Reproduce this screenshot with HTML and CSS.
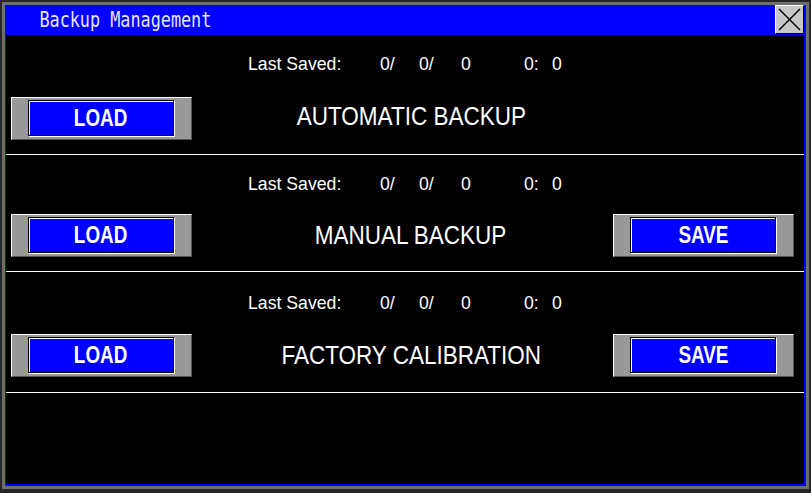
FILE: index.html
```html
<!DOCTYPE html>
<html lang="en">
	<head>
		<meta charset="utf-8">
		<title>Backup Management</title>
		<link rel="stylesheet" href="styles.css">
	</head>
	<body>
		<div class="window">
			<div class="titlebar">
				<span class="caption">Backup Management</span>
				<button class="close" title="Close">
					<svg width="27" height="27" viewBox="0 0 27 27">
						<line x1="3" y1="3" x2="24" y2="24" stroke="#000" stroke-width="1.4"/>
						<line x1="24" y1="3" x2="3" y2="24" stroke="#000" stroke-width="1.4"/>
					</svg>
				</button>
			</div>
			<div class="content">
				<div class="row row-auto">
					<div class="saved">
						<span class="f-label">Last Saved:</span>
						<span class="f-d1">0/</span>
						<span class="f-d2">0/</span>
						<span class="f-d3">0</span>
						<span class="f-d4">0:</span>
						<span class="f-d5">0</span>
					</div>
					<div class="controls">
						<div class="frame"><button class="key"><span>LOAD</span></button></div>
						<div class="name name-up"><span>AUTOMATIC BACKUP</span></div>
						<div class="slot"></div>
					</div>
				</div>
				<div class="row row-manual">
					<div class="saved">
						<span class="f-label">Last Saved:</span>
						<span class="f-d1">0/</span>
						<span class="f-d2">0/</span>
						<span class="f-d3">0</span>
						<span class="f-d4">0:</span>
						<span class="f-d5">0</span>
					</div>
					<div class="controls">
						<div class="frame"><button class="key"><span>LOAD</span></button></div>
						<div class="name"><span>MANUAL BACKUP</span></div>
						<div class="frame frame-right"><button class="key"><span>SAVE</span></button></div>
					</div>
				</div>
				<div class="row row-factory">
					<div class="saved">
						<span class="f-label">Last Saved:</span>
						<span class="f-d1">0/</span>
						<span class="f-d2">0/</span>
						<span class="f-d3">0</span>
						<span class="f-d4">0:</span>
						<span class="f-d5">0</span>
					</div>
					<div class="controls">
						<div class="frame"><button class="key"><span>LOAD</span></button></div>
						<div class="name"><span>FACTORY CALIBRATION</span></div>
						<div class="frame frame-right"><button class="key"><span>SAVE</span></button></div>
					</div>
				</div>
			</div>
		</div>
	</body>
</html>
```
FILE: styles.css
```css
html, body {
	margin: 0;
	padding: 0;
	background: #262626;
}

body {
	font-family: "Liberation Sans", Arial, sans-serif;
	color: #fff;
}

.window {
	box-sizing: border-box;
	margin: 2px;
	width: 807px;
	height: 487px;
	border: 3px solid #6e6e6e;
	display: flex;
	flex-direction: column;
}

.titlebar {
	height: 30px;
	flex: none;
	background: #0000ff;
	display: flex;
	align-items: flex-start;
}

.caption {
	flex: 1;
	padding-left: 43px;
	font-family: "DejaVu Sans Mono", monospace;
	font-size: 21px;
	line-height: 30px;
	color: #e6e6ff;
	transform: scaleX(0.8);
	transform-origin: left;
	white-space: nowrap;
}

.close {
	box-sizing: border-box;
	width: 29px;
	height: 29px;
	margin: 0 2px 0 0;
	padding: 0;
	background: #c8c8c8;
	border: 1px solid;
	border-color: #fff #000 #000 #fff;
	display: flex;
	align-items: center;
	justify-content: center;
}

.close svg {
	display: block;
}

.content {
	flex: 1;
	background: #000;
	border-left: 1px solid #0000ff;
	border-right: 2px solid #0000ff;
	border-bottom: 2px solid #0000ff;
}

.row {
	box-sizing: border-box;
	border-bottom: 1px solid #fff;
}

.row-auto {
	height: 120px;
	padding-top: 19px;
}

.row-manual {
	height: 117px;
	padding-top: 19px;
}

.row-factory {
	height: 121px;
	padding-top: 21px;
}

.saved {
	display: flex;
	padding-left: 242px;
	font-size: 19px;
	line-height: 20px;
}

.saved span {
	display: block;
	white-space: nowrap;
	transform: scaleX(0.93);
	transform-origin: left;
}

.saved .f-label { width: 132px; }
.saved .f-d1 { width: 39px; }
.saved .f-d2 { width: 42px; }
.saved .f-d3 { width: 63px; }
.saved .f-d4 { width: 28px; }

.controls {
	display: flex;
	align-items: center;
}

.row-auto .controls { margin-top: 23px; }
.row-manual .controls { margin-top: 20px; }
.row-factory .controls { margin-top: 21px; }

.frame {
	box-sizing: border-box;
	width: 181px;
	height: 43px;
	margin-left: 5px;
	padding: 2px 0 0 16px;
	background: #999;
	border: 1px solid;
	border-color: #fff #555 #555 #fff;
}

.frame-right {
	margin-left: 0;
	margin-right: 10px;
}

.slot {
	width: 181px;
	margin-right: 10px;
}

.key {
	box-sizing: border-box;
	display: flex;
	align-items: center;
	justify-content: center;
	width: 146px;
	height: 36px;
	margin: 0;
	padding: 0;
	background: #0000ff;
	border: 1px solid #000;
	box-shadow: inset 1px 1px 0 #fff, 1px 1px 0 #fff;
	color: #fff;
	font-family: "Liberation Sans", Arial, sans-serif;
	font-weight: bold;
	font-size: 23px;
	line-height: 1;
}

.key span {
	display: inline-block;
	transform: scaleX(0.82);
}

.name {
	flex: 1;
	padding-left: 17px;
	text-align: center;
	font-size: 25px;
	line-height: 1;
}

.name span {
	display: inline-block;
	white-space: nowrap;
	transform: scaleX(0.9);
}

.name-up {
	margin-bottom: 5px;
}
```
